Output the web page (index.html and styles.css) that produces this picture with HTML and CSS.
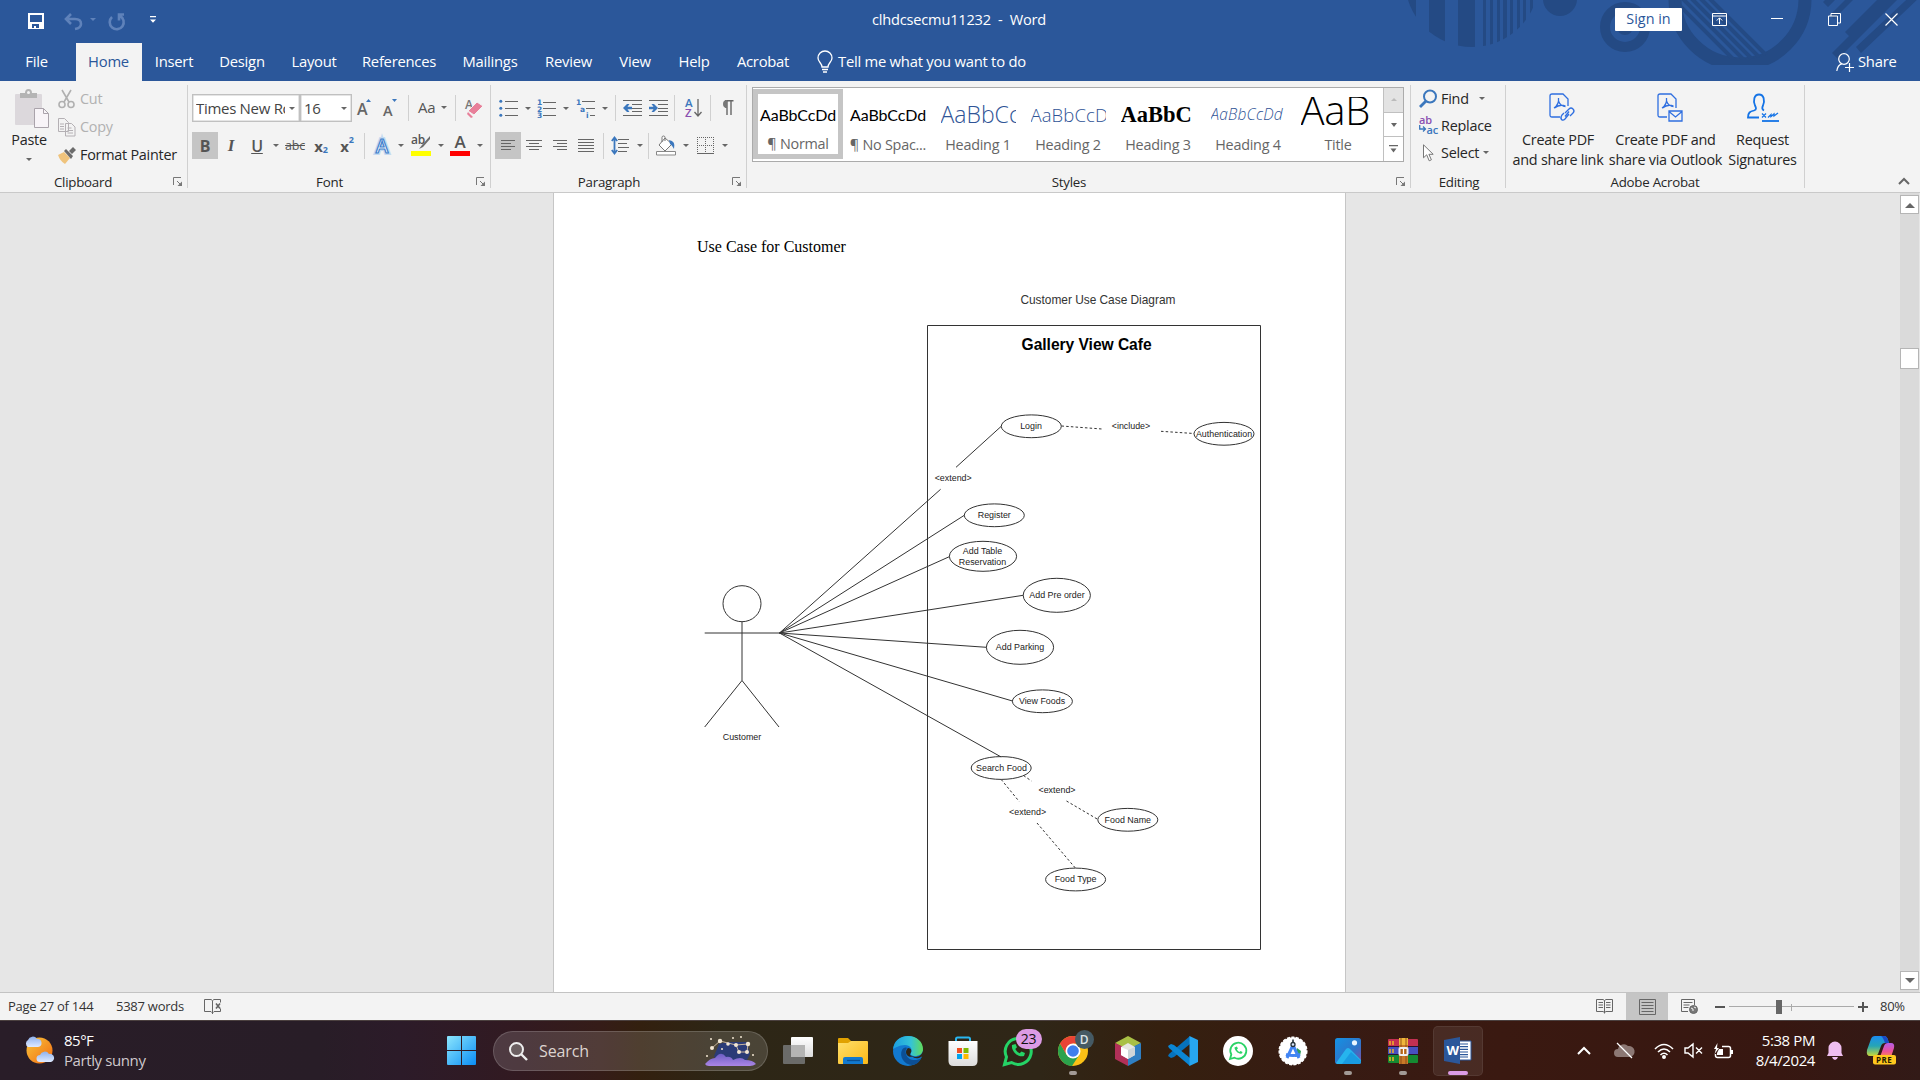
FILE: index.html
```html
<!DOCTYPE html>
<html lang="en">
<head>
<meta charset="utf-8">
<title>clhdcsecmu11232 - Word</title>
<link rel="stylesheet" href="styles.css">
</head>
<body>
<svg width="0" height="0" class="defs">
  <defs>
    <symbol id="launch" viewBox="0 0 10 10"><path d="M.5 8V.5H8M4 4l4 4" fill="none" stroke="#777"/><path d="M9 4.500V9H4.500z" fill="#777"/></symbol>
    <linearGradient id="gSun" x1="0" y1="0" x2="1" y2="1"><stop offset="0" stop-color="#f8c63a"/><stop offset="1" stop-color="#f26a12"/></linearGradient>
    <linearGradient id="gCloud" x1="0" y1="0" x2="0" y2="1"><stop offset="0" stop-color="#8fb2ee"/><stop offset="1" stop-color="#dfeaff"/></linearGradient>
    <linearGradient id="gWin" x1="0" y1="0" x2="1" y2="1"><stop offset="0" stop-color="#8ce6fd"/><stop offset="1" stop-color="#0a8df5"/></linearGradient>
    <linearGradient id="gWhite" x1="0" y1="0" x2="0" y2="1"><stop offset="0" stop-color="#fff"/><stop offset="1" stop-color="#dcdcdc"/></linearGradient>
    <linearGradient id="gFold" x1="0" y1="0" x2="1" y2="1"><stop offset="0" stop-color="#ffdf6b"/><stop offset="1" stop-color="#fbb917"/></linearGradient>
    <linearGradient id="gEdge" x1="0" y1="0" x2="1" y2="0"><stop offset="0" stop-color="#1b9de2"/><stop offset=".6" stop-color="#35c3d6"/><stop offset="1" stop-color="#62dc58"/></linearGradient>
    <linearGradient id="gPhoto" x1="0" y1="0" x2="1" y2="1"><stop offset="0" stop-color="#1492e4"/><stop offset=".6" stop-color="#2f74c9"/><stop offset="1" stop-color="#8150a5"/></linearGradient>
    <linearGradient id="gHill" x1="0" y1="0" x2="0" y2="1"><stop offset="0" stop-color="#6c5dc4"/><stop offset="1" stop-color="#ab86e6"/></linearGradient>
    <linearGradient id="gCoA" x1="0" y1="0" x2="0" y2="1"><stop offset="0" stop-color="#1b8cf0"/><stop offset=".5" stop-color="#25a5b5"/><stop offset="1" stop-color="#c9d938"/></linearGradient>
    <linearGradient id="gCoB" x1="0" y1="0" x2="0" y2="1"><stop offset="0" stop-color="#b35ee8"/><stop offset=".6" stop-color="#ee5297"/><stop offset="1" stop-color="#fb8a4d"/></linearGradient>
  </defs>
</svg>
<div class="app">
  <header class="head">
    <svg class="head-art" width="520" height="81" viewBox="0 0 520 81" fill="#244a84">
      <clipPath id="cl"><circle cx="72" cy="-20" r="67"/></clipPath>
      <g clip-path="url(#cl)"><path d="M7 0h9v40H7zM29 0h16v60H29zM58 0h17v60H58zM83 0h3v60h-3zM90 0h3v60h-3zM97 0h3v60h-3zM103 0h4v60h-4zM110 0h3v60h-3zM117 0h3v60h-3zM123 0h3v60h-3zM130 0h3v60h-3z"/></g>
      <circle cx="160" cy="-1" r="17"/>
      <circle cx="225" cy="27" r="20" fill="none" stroke="#244a84" stroke-width="10"/><circle cx="225" cy="27" r="8"/>
      <clipPath id="cr"><path d="M260 0h160v65H260z"/></clipPath>
      <clipPath id="cc"><circle cx="340" cy="-6" r="66"/></clipPath>
      <g clip-path="url(#cr)"><circle cx="340" cy="-1" r="65" fill="none" stroke="#244a84" stroke-width="13"/>
      <g clip-path="url(#cc)" stroke="#244a84" stroke-width="4"><path d="M274-10l80 80M283-10l80 80M292-10l80 80M301-10l80 80M264-10l80 80" /></g></g>
      <path d="M455-30l-32 32 5 5 37-37zM487-10l-42 42 5 5 47-47zM509-24l-77 77 6 6 83-83zM520-13l-64 60 5 6 59-56zM475-30l-45 45 4 4 50-50z"/>
    </svg>
    <div class="titlebar">
      <div class="quick">
        <svg width="16" height="16" viewBox="0 0 16 16"><path d="M0 0h16v16H0zM2 2v7h12V2zM4 11v4h2v-2h2v2h3v-4z" fill="#fff" fill-rule="evenodd"/></svg>
        <svg class="q-undo" width="32" height="18" viewBox="0 0 32 18"><path d="M7 1L2 6l5 5M2 6h9q6 0 6 5 0 4-6 5" fill="none" stroke="#5f82ba" stroke-width="2.600"/><path d="M26 5h6l-3 3z" fill="#5f82ba"/></svg>
        <svg class="q-redo" width="18" height="18" viewBox="0 0 18 18"><path d="M4 4a7 7 0 1 0 8-1M16 1.500h-5v6" fill="none" stroke="#5f82ba" stroke-width="2.600"/></svg>
        <svg class="q-more" width="6" height="8" viewBox="0 0 6 8"><path d="M0 0h6v1.300H0zM0 3.500h6L3 6.800z" fill="#fff"/></svg>
      </div>
      <div class="doc-title">clhdcsecmu11232&nbsp; -&nbsp; Word</div>
      <div class="win-ctl">
        <span class="signin">Sign in</span>
        <svg class="w1" width="15" height="13" viewBox="0 0 15 13" fill="none" stroke="#fff"><path d="M.5.500h14v12H.500zM.500 3h14M7.500 11V5M4.800 7.500l2.700-2.700 2.700 2.700"/></svg>
        <svg class="w2" width="12" height="12" viewBox="0 0 12 12"><path d="M0 5.500h12" stroke="#fff" fill="none"/></svg>
        <svg class="w3" width="13" height="13" viewBox="0 0 13 13" fill="none" stroke="#fff"><path d="M.500 3h9v9.500h-9zM3 3V.500h9.500V10H10"/></svg>
        <svg class="w4" width="13" height="13" viewBox="0 0 13 13" fill="none" stroke="#fff" stroke-width="1.200"><path d="M.5.500l12 12M12.500.500l-12 12"/></svg>
      </div>
    </div>
    <nav class="tabs">
      <span class="t-file">File</span><span class="t-home">Home</span><span class="t-insert">Insert</span><span class="t-design">Design</span><span class="t-layout">Layout</span><span class="t-ref">References</span><span class="t-mail">Mailings</span><span class="t-review">Review</span><span class="t-view">View</span><span class="t-help">Help</span><span class="t-acro">Acrobat</span>
      <svg class="bulb" width="16" height="23" viewBox="0 0 16 23" fill="none" stroke="#fff" stroke-width="1.300"><path d="M5 16c0-4-4-5-4-9a7 7 0 0 1 14 0c0 4-4 5-4 9zM5 18.500h6M6 21h4"/></svg>
      <span class="tell">Tell me what you want to do</span>
      <svg class="share-i" width="19" height="19" viewBox="0 0 19 19" fill="none" stroke="#fff" stroke-width="1.200"><circle cx="8" cy="6" r="5.300"/><path d="M.800 18c.5-4 2.500-6.500 5-7.200M9 14.500h9M13.500 10v9"/></svg>
      <span class="share">Share</span>
    </nav>
  </header>

  <section class="ribbon">
    <div class="group g-clip">
      <div class="g-body clip">
        <div class="paste">
          <svg width="36" height="40" viewBox="0 0 36 40"><rect x="1" y="5" width="27" height="31" rx="1" fill="#dcd8dc"/><path d="M6 4h5q0-4 3.500-4T18 4h5v5H6z" fill="#b4b4b4"/><circle cx="14.500" cy="3.500" r="1.500" fill="#f3f3f3"/><path d="M20.500 19.500h9l5 5v14h-14z" fill="#f8f4f8" stroke="#aaa3ab"/><path d="M29.500 19.500v5h5" fill="none" stroke="#aaa3ab"/></svg>
          <span>Paste</span><i class="arr"></i>
        </div>
        <div class="clip-list">
          <div class="off"><svg width="18" height="19" viewBox="0 0 18 19" fill="none" stroke="#b0b0b0" stroke-width="1.600"><path d="M4 0l7 12M13 0L6 12"/><circle cx="4" cy="14.500" r="3"/><circle cx="13" cy="14.500" r="3"/></svg><span>Cut</span></div>
          <div class="off"><svg width="18" height="19" viewBox="0 0 18 19" fill="#f3f3f3" stroke="#b4b0b4"><path d="M.5.500h6l4 4v9H.500zM7.500 5.500h6l3.500 3.500v9H7.500zM2 6h4M2 8.500h4M2 11h4M9.500 10h4M9.500 12.500h5.500M9.500 15h5.500"/></svg><span>Copy</span></div>
          <div><svg width="18" height="17" viewBox="0 0 18 17"><path d="M0 8l6-3 6 6-5 6q-5-3-7-9z" fill="#efc37c"/><path d="M6 4l2-2 7 7-2 3zM11 4l4-4 3 3-4 4z" fill="#6b6b6b"/></svg><span>Format Painter</span></div>
        </div>
      </div>
      <div class="g-label"><span>Clipboard</span><svg width="10" height="10"><use href="#launch"/></svg></div>
    </div>

    <div class="group g-font">
      <div class="g-body">
        <div class="row">
          <div class="combo c-font"><span>Times New Ro</span><i class="arr"></i></div>
          <div class="combo c-size"><span>16</span><i class="arr"></i></div>
          <b class="btn w26"><svg width="16" height="18" viewBox="0 0 16 18"><text x="0" y="16" class="ga">A</text><path d="M9 3h5l-2.500-3z" fill="#3b77bd"/></svg></b>
          <b class="btn w26"><svg width="16" height="18" viewBox="0 0 16 18"><text x="0" y="17" class="gb">A</text><path d="M9 0h5l-2.500 3z" fill="#3b77bd"/></svg></b>
          <i class="sep m4"></i>
          <b class="btn w40 aa">Aa<i class="arr"></i></b>
          <i class="sep m3"></i>
          <b class="btn w30"><svg width="18" height="20" viewBox="0 0 18 20"><text x="0" y="11" class="gc">A</text><path d="M3 13l9-9 6 4-9 9z" fill="#e8809a" stroke="#f3f3f3"/><path d="M3 14l5 5-2 1-4-4z" fill="#e8809a"/></svg></b>
        </div>
        <div class="row">
          <b class="btn w26 on fb">B</b><b class="btn w26 fi">I</b><b class="btn w26 fu"><u>U</u></b><b class="btn w12"><i class="arr"></i></b>
          <b class="btn w26 fs"><s>abc</s></b><b class="btn w26 fx">x<sub>2</sub></b><b class="btn w26 fx">x<sup>2</sup></b>
          <i class="sep m4"></i>
          <b class="btn w28"><svg width="18" height="20" viewBox="0 0 18 20"><text x="9" y="17" class="halo">A</text><text x="9" y="17" class="glow">A</text></svg></b><b class="btn w9"><i class="arr"></i></b>
          <b class="btn w34"><svg width="20" height="21" viewBox="0 0 20 21"><text x="0" y="9" class="gh">ab</text><path d="M19 1l-8 9-3 4 4-2 7-8z" fill="#6d6d6d"/><path d="M0 16h20v5H0z" fill="#ff0"/></svg></b><b class="btn w9"><i class="arr"></i></b>
          <b class="btn w30"><svg width="20" height="21" viewBox="0 0 20 21"><text x="10" y="13" class="gr">A</text><path d="M0 16h20v5H0z" fill="red"/></svg></b><b class="btn w9"><i class="arr"></i></b>
        </div>
      </div>
      <div class="g-label"><span>Font</span><svg width="10" height="10"><use href="#launch"/></svg></div>
    </div>

    <div class="group g-para">
      <div class="g-body">
        <div class="row">
          <b class="btn w27"><svg width="19" height="18" viewBox="0 0 19 18"><path d="M6 2.500h13M6 9.500h13M6 16.500h13" stroke="#666"/><g fill="#3b77bd"><circle cx="1.800" cy="2.300" r="1.500"/><circle cx="1.800" cy="9.300" r="1.500"/><circle cx="1.800" cy="16.300" r="1.500"/></g></svg></b><b class="btn w11"><i class="arr"></i></b>
          <b class="btn w27"><svg width="19" height="19" viewBox="0 0 19 19"><path d="M6 3.500h13M6 9.500h13M6 16.500h13" stroke="#666"/><g class="num"><text x="0" y="6">1</text><text x="0" y="12.500">2</text><text x="0" y="19">3</text></g></svg></b><b class="btn w12"><i class="arr"></i></b>
          <b class="btn w27"><svg width="19" height="19" viewBox="0 0 19 19"><path d="M6 2.500h13M10 9.500h9M14 16.500h5" stroke="#666"/><g class="num"><text x="0" y="6">1</text><text x="4" y="12.500">a</text><text x="10" y="19">i</text></g></svg></b><b class="btn w12"><i class="arr"></i></b>
          <i class="sep m4"></i>
          <b class="btn w26"><svg width="19" height="16" viewBox="0 0 19 16"><path d="M0 .5h19M9 4.500h10M9 8.500h10M9 11.500h10M0 15.500h19" stroke="#666"/><path d="M0 8l4-4h2.500L4.500 6.800H9v2.500H4.500L6.500 12H4z" fill="#3b77bd"/></svg></b>
          <b class="btn w26"><svg width="19" height="16" viewBox="0 0 19 16"><path d="M0 .5h19M9 4.500h10M9 8.500h10M9 11.500h10M0 15.500h19" stroke="#666"/><path d="M9 8L5 4H2.500l2 2.800H0v2.500h4.500L2.500 12H5z" fill="#3b77bd"/></svg></b>
          <i class="sep m3"></i>
          <b class="btn w30"><svg width="17" height="20" viewBox="0 0 17 20"><text x="0" y="9" class="az1">A</text><text x="0" y="19" class="az2">Z</text><path d="M13 1v17M9.500 14l3.500 4 3.500-4" fill="none" stroke="#666" stroke-width="1.300"/></svg></b>
          <i class="sep m2"></i>
          <b class="btn w26"><svg width="13" height="16" viewBox="0 0 13 16"><path d="M5 8V0M6 0v15M10 0v15M4 .700h8.500" stroke="#666" stroke-width="1.400"/><path d="M6 8a4 4 0 0 1 0-8z" fill="#777"/></svg></b>
        </div>
        <div class="row">
          <b class="btn w26 on"><svg width="14" height="12" viewBox="0 0 14 12"><path d="M0 .5h14M0 3.500h10M0 6.500h14M0 9.500h10" stroke="#666"/></svg></b>
          <b class="btn w26"><svg width="16" height="12" viewBox="0 0 16 12"><path d="M0 .5h16M3 3.500h10M0 6.500h16M3 9.500h10" stroke="#666"/></svg></b>
          <b class="btn w26"><svg width="14" height="12" viewBox="0 0 14 12"><path d="M0 .5h14M4 3.500h10M0 6.500h14M4 9.500h10" stroke="#666"/></svg></b>
          <b class="btn w26"><svg width="16" height="14" viewBox="0 0 16 14"><path d="M0 .5h16M0 3.500h16M0 6.500h16M0 9.500h16M0 12.500h16" stroke="#666"/></svg></b>
          <i class="sep m4"></i>
          <b class="btn w27"><svg width="19" height="19" viewBox="0 0 19 19"><path d="M7 3.500h11M7 7.500h9M7 11.500h11M7 15.500h9" stroke="#666"/><path d="M3.500 2v15M.8 5l2.700-3.500L6.200 5M.8 14l2.700 3.500L6.200 14" fill="none" stroke="#3b77bd" stroke-width="1.800"/></svg></b><b class="btn w11"><i class="arr"></i></b>
          <i class="sep m3"></i>
          <b class="btn w28"><svg width="21" height="20" viewBox="0 0 21 20"><path d="M9 2l7 6-7 7-6-6zM9 5V1.500q0-1.500-1.500-1.500T6 1.500V6" fill="#fff" stroke="#777"/><path d="M13 4q7 1 5 9-2-4-4-5z" fill="#3b77bd"/><path d="M.500 15.500h19v3.500H.500z" fill="#fff" stroke="#888"/></svg></b><b class="btn w12"><i class="arr"></i></b>
          <b class="btn w27"><svg width="17" height="17" viewBox="0 0 17 17" fill="none" stroke="#666"><path d="M0 .500h17M.500 0v17M16.500 0v17M0 8.500h17M8.500 0v17" stroke-dasharray="1 1"/><path d="M0 16.500h17"/></svg></b><b class="btn w12"><i class="arr"></i></b>
        </div>
      </div>
      <div class="g-label"><span>Paragraph</span><svg width="10" height="10"><use href="#launch"/></svg></div>
    </div>

    <div class="group g-styles">
      <div class="g-body">
        <div class="gallery">
          <div class="st sel"><em class="s0">AaBbCcDd</em><span>¶ Normal</span></div>
          <div class="st"><em class="s0">AaBbCcDd</em><span>¶ No Spac...</span></div>
          <div class="st"><em class="s1">AaBbCc</em><span>Heading 1</span></div>
          <div class="st"><em class="s2">AaBbCcD</em><span>Heading 2</span></div>
          <div class="st"><em class="s3">AaBbC</em><span>Heading 3</span></div>
          <div class="st"><em class="s4">AaBbCcDd</em><span>Heading 4</span></div>
          <div class="st"><em class="s5">AaB</em><span>Title</span></div>
          <div class="gal-scroll"><p class="dim"><svg width="6" height="3"><path d="M0 3h6L3 0z" fill="#bbb"/></svg></p><p><svg width="6" height="4"><path d="M0 0h6L3 4z" fill="#666"/></svg></p><p><svg width="9" height="8"><path d="M0 0h9v1.200H0zM1.500 3.500h6l-3 4z" fill="#666"/></svg></p></div>
        </div>
      </div>
      <div class="g-label"><span>Styles</span><svg width="10" height="10"><use href="#launch"/></svg></div>
    </div>

    <div class="group g-edit">
      <div class="g-body edit">
        <div><svg width="19" height="19" viewBox="0 0 19 19" fill="none" stroke="#3b77bd"><circle cx="11" cy="7.500" r="6" stroke-width="2"/><path d="M7 12l-6 6" stroke-width="2.800"/></svg><span>Find</span><i class="arr a1"></i></div>
        <div><svg width="19" height="20" viewBox="0 0 19 20"><text x="0" y="8" class="rp">ab</text><text x="7.500" y="17.500" class="rp rq">ac</text><path d="M.7 9v4h5.500M4 10.500L6.500 13 4 15.500" fill="none" stroke="#3b77bd" stroke-width="1.300"/></svg><span>Replace</span></div>
        <div><svg width="19" height="18" viewBox="0 0 19 18"><path d="M4.500.8v13l3.200-3 2.500 6 2.200-1-2.500-5.500h4.300z" fill="#fff" stroke="#777"/></svg><span>Select</span><i class="arr a2"></i></div>
      </div>
      <div class="g-label"><span>Editing</span></div>
    </div>

    <div class="group g-acro">
      <div class="g-body acro">
        <div class="ac1"><svg width="26" height="30" viewBox="0 0 26 30" fill="none" stroke="#2f6fe0" stroke-width="1.300"><path d="M11 24H3q-2 0-2-2V3q0-2 2-2h11l5 5v7"/><path d="M5 15c3-2 5-6 4.500-10M9.500 8c1 3 4 5.500 7 5.500M5.500 15c3-2.500 7-3.500 11-2"/><path d="M16 20l4-4q2-2 4 0t0 4l-3 3M20 21l-4 5q-2 2-3.500.5T13 22l2-2M16 23.500l4-5"/></svg><span>Create PDF<br>and share link</span></div>
        <div class="ac2"><svg width="26" height="30" viewBox="0 0 26 30" fill="none" stroke="#2f6fe0" stroke-width="1.300"><path d="M10 24H3q-2 0-2-2V3q0-2 2-2h11l5 5v9"/><path d="M5 15c3-2 5-6 4.500-10M9.500 8c1 3 4 5.500 7 5.500M5.500 15c3-2.500 7-3.500 11-2"/><path d="M12 18h13v10H12zM12 18.500l6.500 5.500 6.500-5.500"/></svg><span>Create PDF and<br>share via Outlook</span></div>
        <div class="ac3"><svg width="32" height="29" viewBox="0 0 32 29" fill="none" stroke="#1473e6" stroke-width="1.800"><path d="M12 24H1c0-5 2-6 6-7 3-1 2-3 1-5-2-5-1-11 4-11s6 6 4 11c-1 2-1 4 1 5"/><path d="M15 20l4 4M19 20l-4 4M21 24l3-3 0 2 3-2.500 0 2 4-3" stroke-width="1.300"/><path d="M15 27.500h17" stroke-width="1.800"/></svg><span>Request<br>Signatures</span></div>
      </div>
      <div class="g-label"><span>Adobe Acrobat</span></div>
    </div>
    <svg class="collapse" width="12" height="8" viewBox="0 0 12 8"><path d="M1 7l5-5 5 5" fill="none" stroke="#666" stroke-width="2"/></svg>
  </section>

  <main class="work">
    <article class="page">
      <h1>Use Case for Customer</h1>
      <svg class="diagram" width="620" height="700" viewBox="680 270 620 700">
        <g fill="none" stroke="#333">
          <path d="M927.500 325.500H1260.500V949.500H927.500z"/>
          <ellipse cx="742" cy="603.700" rx="19" ry="18"/>
          <path d="M742 622v58.500M704.700 633H779.500M704.700 727l37.300-46.500L779 727"/>
          <path d="M779.500 633L940.600 489.300M956 467.300L1001 426.500M779.500 633L964.300 515.300M779.500 633L949.300 556.700M779.500 633L1023.200 595.300M779.500 633L986.400 647.300M779.500 633L1012.500 701M779.500 633L1001.200 757"/>
          <ellipse cx="1031.300" cy="426.300" rx="30" ry="11.400"/><ellipse cx="1224" cy="433.800" rx="30" ry="11.400"/>
          <ellipse cx="994.300" cy="515.300" rx="30" ry="11.400"/><ellipse cx="983" cy="556.300" rx="33.600" ry="15"/>
          <ellipse cx="1056.800" cy="595.300" rx="33.600" ry="17"/><ellipse cx="1020" cy="647.300" rx="33.600" ry="17"/>
          <ellipse cx="1042.400" cy="701.300" rx="30" ry="11.400"/><ellipse cx="1001.200" cy="768" rx="30" ry="11.400"/>
          <ellipse cx="1127.800" cy="819.800" rx="30" ry="11.400"/><ellipse cx="1075.600" cy="879.500" rx="30" ry="11.400"/>
          <path stroke-dasharray="2.500 2.200" d="M1061.500 426l40.500 3M1161 431.300l33 2.200M1023.500 775.500l8 5.500M1066.500 801l31.500 18.500M1001.200 779.500l18 22M1037 823l38.600 45.300"/>
        </g>
        <text x="1020.400" y="304" class="d-cap" textLength="155">Customer Use Case Diagram</text>
        <text x="1021.600" y="350" class="d-title" textLength="130">Gallery View Cafe</text>
        <g class="d-t">
          <text x="742" y="740">Customer</text><text x="1031" y="429">Login</text><text x="1131" y="429">&lt;include&gt;</text><text x="1224" y="436.500">Authentication</text>
          <text x="953.200" y="480.500">&lt;extend&gt;</text><text x="994.300" y="518">Register</text><text x="982.500" y="554">Add Table</text><text x="982.500" y="565">Reservation</text>
          <text x="1057" y="598">Add Pre order</text><text x="1020" y="650">Add Parking</text><text x="1042" y="704">View Foods</text><text x="1001.500" y="771">Search Food</text>
          <text x="1057" y="793">&lt;extend&gt;</text><text x="1027.600" y="815">&lt;extend&gt;</text><text x="1127.800" y="823">Food Name</text><text x="1075.600" y="882">Food Type</text>
        </g>
      </svg>
    </article>
    <div class="vscroll">
      <p><svg width="10" height="6"><path d="M0 6h10L5 1z" fill="#666"/></svg></p>
      <p class="thumb"></p>
      <p class="down"><svg width="10" height="6"><path d="M0 0h10L5 5z" fill="#666"/></svg></p>
    </div>
  </main>

  <footer class="status">
    <span class="s-page">Page 27 of 144</span><span class="s-words">5387 words</span>
    <svg class="s-proof" width="17" height="15" viewBox="0 0 17 15" fill="none" stroke="#666"><path d="M8.500 2v13M8.500 1.500L7 .500H.500v12h6.500l1.500 1.500 1.500-1.500h6.500v-3M8.500 1.500L10 .500h6.500v3"/><path d="M12 4.500l4 5M16 4.500l-4 5" stroke-width="1.600"/></svg>
    <svg class="s-read" width="17" height="15" viewBox="0 0 17 15" fill="none" stroke="#666"><path d="M8.500 1.500v13M8.500 1.500L7 .500H.500v12H7l1.500 1 1.500-1h6.500V.500H10zM2.500 3.500H7M2.500 6H7M2.500 8.500H7M10 3.500h4.500M10 6h4.500M10 8.500h4.500"/></svg>
    <b class="s-print"><svg width="17" height="16" viewBox="0 0 17 16" fill="none" stroke="#666"><path d="M.5.500h16v15H.500zM2.500 3.500h12M2.500 6.500h12M2.500 9.500h12M2.500 12.500h12"/></svg></b>
    <svg class="s-web" width="17" height="15" viewBox="0 0 17 15" fill="none" stroke="#666"><path d="M7 12.500H.500V.500h13V6M2.500 3.500h9M2.500 6h6M2.500 8.500h5"/><circle cx="12.500" cy="10.500" r="4" fill="#777"/><path d="M10 9l2 1v2M13 8l2 1" stroke="#f3f3f3"/></svg>
    <i class="zm"></i>
    <div class="slider"><i class="knob"></i><i class="tick"></i></div>
    <svg class="zp" width="10" height="10"><path d="M0 5h10M5 0v10" stroke="#555" stroke-width="2"/></svg>
    <span class="s-zoom">80%</span>
  </footer>

  <footer class="taskbar">
    <svg class="wx" width="31" height="30" viewBox="0 0 31 30"><circle cx="15.500" cy="15.500" r="13" fill="url(#gSun)"/><path d="M4 12a4 4 0 0 1 0-7 5 5 0 0 1 9-1 4 4 0 0 1 1 8z" fill="url(#gCloud)"/><path d="M16 27a3.500 3.500 0 0 1 0-7 5 5 0 0 1 9-1 4 4 0 0 1 2 8z" fill="url(#gCloud)"/></svg>
    <div class="wtext"><span>85°F</span><span class="dimt">Partly sunny</span></div>
    <svg class="start" width="29" height="29" viewBox="0 0 29 29" fill="url(#gWin)"><path d="M0 1q0-1 1-1h13v14H0zM15 0h13q1 0 1 1v13H15zM0 15h14v14H1q-1 0-1-1zM15 15h14v13q0 1-1 1H15z"/></svg>
    <div class="search"><svg width="20" height="20" viewBox="0 0 20 20" fill="none" stroke="#eee" stroke-width="2"><circle cx="8.500" cy="8.500" r="6.500" fill="#6b5f61"/><path d="M13 13l6 6" stroke-width="2.400"/></svg><span>Search</span>
      <svg class="stars" width="52" height="30" viewBox="0 0 52 30"><path d="M9 20L14 8l8-2 20 0 3 12-4 8H12z" fill="#2b3b77"/><path d="M0 28q5-6 10-6 6-8 11-1 5-1 7 3 8-4 12 0 8 0 11 4-3 2-6 2H4q-3 0-4-2z" fill="url(#gHill)"/><path d="M7 12l8-7 8 2 8 2 12-1-1 8h-8l-3-7" fill="none" stroke="#c9b49b"/><g fill="#f2e6d2"><circle cx="7" cy="12" r="2"/><circle cx="15" cy="5" r="2.200"/><circle cx="23" cy="8" r="1.800"/><circle cx="31" cy="9" r="2"/><circle cx="43" cy="8" r="2.200"/><circle cx="42" cy="16" r="2"/><circle cx="34" cy="16" r="2"/><circle cx="6" cy="3" r="1"/><circle cx="28" cy="2" r="1"/><circle cx="36" cy="1" r="1"/><circle cx="2" cy="20" r="1"/><circle cx="48" cy="19" r="1"/><circle cx="17" cy="13" r="1"/></g></svg>
    </div>
    <div class="apps">
      <b><svg width="30" height="30" viewBox="0 0 30 30"><rect x="0" y="9" width="22" height="19" rx="1" fill="#6b6b69"/><rect x="8" y="1" width="22" height="20" rx="1" fill="url(#gWhite)"/><path d="M8 9h14v12H8z" fill="#b4b4b3"/></svg></b>
      <b><svg width="30" height="30" viewBox="0 0 30 30"><path d="M0 3q0-1 1-1h9l3 3v7H0z" fill="#e1a100"/><path d="M0 7h10l3-2h16q1 0 1 1v21q0 1-1 1H1q-1 0-1-1z" fill="url(#gFold)"/><path d="M5 28v-5q0-2 2-2h16q2 0 2 2v5z" fill="#1279cf"/><path d="M9 24.500h13" stroke="#0a4f92" stroke-width="1.300"/></svg></b>
      <b><svg width="30" height="30" viewBox="0 0 30 30"><circle cx="15" cy="15" r="15" fill="#1279d0"/><path d="M0 13C1 5 7 0 15 0c9 0 15 6 15 13 0 5-4 7-8 7-3 0-5-1-4-3 2-4-1-8-6-8-6 0-10 3-12 4z" fill="url(#gEdge)"/><path d="M9 14c-3 6 2 15 10 15 4 0 8-3 9-7-5 4-14 2-15-4-1-3 0-5 1-6-2-1-4 0-5 2z" fill="#0c4f95"/><path d="M19 20c4 2 9 1 11-5v5l-4 2q-5 1-7-2z" fill="#2f2617"/><path d="M15 12c4 0 4 4 2 6 0 2 2 2 4 2-4 2-8 0-8-4 0-2 1-3 2-4z" fill="#2f2617"/></svg></b>
      <b><svg width="30" height="30" viewBox="0 0 30 30"><path d="M8 6V3q0-1.500 1.500-1.500h11Q22 1.500 22 3v3" fill="none" stroke="#29b6f0" stroke-width="2"/><path d="M.500 5h29v20q0 5-5 5h-19q-5 0-5-5z" fill="url(#gWhite)"/><path d="M9 12h5v5H9z" fill="#f25022"/><path d="M15.500 12h5v5h-5z" fill="#7fba00"/><path d="M9 18h5v5H9z" fill="#00a4ef"/><path d="M15.500 18h5v5h-5z" fill="#ffb900"/></svg></b>
      <b><svg width="30" height="30" viewBox="0 0 30 30" fill="none" stroke="#25d366"><path d="M1.500 28.500l2-7.500a13 13 0 1 1 5 5.500z" stroke-width="3"/><path d="M9 9c-1 6 6 13 12 11l1-3-3.500-1.500-1.800 1.800q-3-1.300-4.400-4.300l1.700-1.700L12.500 8z" fill="#25d366" stroke="none"/></svg><u class="badge">23</u></b>
      <b><svg width="30" height="30" viewBox="0 0 30 30"><circle cx="15" cy="15" r="15" fill="#fbc116"/><path d="M2 7.500A15 15 0 0 0 14 30l7.500-11.500L8.500 18.500z" fill="#2ba24c"/><path d="M2 7.500A15 15 0 0 1 28 7.500H15l-6.500 11z" fill="#e94335"/><circle cx="15" cy="15" r="7.500" fill="#fff"/><circle cx="15" cy="15" r="5.800" fill="#3f7fee"/></svg><u class="dbadge">D</u><i class="run"></i></b>
      <b><svg width="26" height="30" viewBox="0 0 26 30"><path d="M0 7l13-7 13 7-13 7z" fill="#a9c045"/><path d="M0 7l13 6v17L0 23z" fill="#b13058"/><path d="M26 7l-13 6v17l13-7z" fill="#2f7fc3"/><path d="M13 7l7 4v8l-7 4-7-4v-8z" fill="#e6e6e1"/><path d="M13 14v9l-7-4v-8z" fill="#fff"/><path d="M13 14v9l7-4v-8z" fill="#cfd6d8"/></svg></b>
      <b><svg width="30" height="30" viewBox="0 0 30 30"><path d="M22 0L1 18l-1 2 3 2 3-1L22 8z" fill="#0672bd"/><path d="M22 30L1 12l-1-2 3-2 3 1 16 13z" fill="#0b86d4"/><path d="M21.500 0L30 4v22l-8.500 4z" fill="#27a6f0"/></svg></b>
      <b><svg width="30" height="30" viewBox="0 0 30 30"><circle cx="15" cy="15" r="15" fill="#fff"/><g fill="none" stroke="#2ad366"><path d="M7 23l1.300-4.500a8 8 0 1 1 3.200 3.200z" stroke-width="1.800"/><path d="M11.500 11.500c0 3 4 7 7.500 6l.5-1.500-2-1-1 1q-1.800-.8-2.600-2.500l1-1-1-2z" fill="#2ad366" stroke="none"/></g></svg></b>
      <b><svg width="30" height="30" viewBox="0 0 30 30"><circle cx="15" cy="15" r="13.800" fill="#fff" stroke="#fff" stroke-width="1.500" stroke-dasharray="3 1.500"/><path d="M19 12l4 3-1 5-5 1z" fill="#2e9e5b"/><path d="M9 22L15 9l6 13M8 18.500q7 2 14 0" fill="none" stroke="#4285f4" stroke-width="3"/><circle cx="15" cy="8.500" r="2" fill="#dce9ff" stroke="#263238" stroke-width="1.300"/><path d="M14.200 3.500h1.600v3h-1.600z" fill="#263238"/></svg></b>
      <b><svg width="26" height="26" viewBox="0 0 26 26"><rect width="26" height="26" rx="2.500" fill="url(#gPhoto)"/><path d="M1 25L11 11q2-2 4 0l11 11v2q0 2-2 2H2z" fill="#26b4ee"/><path d="M7 26l9-12 10 9v1q0 2-2 2z" fill="#0f86d8" opacity=".55"/><circle cx="19.500" cy="4.800" r="2.600" fill="#e9f5ff"/></svg><i class="run"></i></b>
      <b><svg width="30" height="26" viewBox="0 0 30 26"><rect y="1" width="30" height="8" rx="1" fill="#c33052"/><rect y="9" width="30" height="8" fill="#4750c0"/><rect y="17" width="30" height="8" rx="1" fill="#158a32"/><path d="M0 8.500h30M0 16.500h30" stroke="#261430"/><path d="M2 3v4M2 11v4M2 19v4M5 3v4M5 11v4M5 19v4" stroke="#f0b429" stroke-width="1.500"/><path d="M11 0h9v26h-9z" fill="#c87928"/><path d="M11 0h9v7h-9z" fill="#efb63b"/><path d="M13 0v26M18 0v26" stroke="#84420f" stroke-width=".8"/><rect x="11.500" y="10" width="8" height="7" rx="1" fill="none" stroke="#eee" stroke-width="2"/><path d="M15.500 11v5" stroke="#fff"/></svg><i class="run"></i></b>
      <b class="cur"><svg width="28" height="28" viewBox="0 0 28 28"><path d="M14 4h13v19H14z" fill="#fff" stroke="#2b579a" stroke-width="1"/><path d="M16 7h8M16 9.700h8M16 12.400h8M16 15h8M16 17.700h8M16 20h8" stroke="#2b579a" stroke-width="1.200"/><path d="M0 3l16-3v27L0 24z" fill="#2b579a"/><text x="2.500" y="18" class="wd">W</text></svg><i class="run now"></i></b>
    </div>
    <svg class="t1" width="14" height="9" viewBox="0 0 14 9"><path d="M1 8l6-6 6 6" fill="none" stroke="#fff" stroke-width="2"/></svg>
    <svg class="t2" width="20" height="16" viewBox="0 0 20 16"><path d="M4 14a4 4 0 0 1 0-8 6 6 0 0 1 10-3 5 5 0 0 1 2 11z" fill="#8c7874"/><path d="M3 0l15 15" stroke="#fff" stroke-width="1.300"/></svg>
    <svg class="t3" width="20" height="16" viewBox="0 0 20 16" fill="none" stroke="#fff" stroke-width="1.600"><path d="M1 6q9-9 18 0M4 9q6-6 12 0M6.500 12q3.500-3.500 7 0"/><circle cx="10" cy="14" r="1.200" fill="#fff"/></svg>
    <svg class="t4" width="19" height="15" viewBox="0 0 19 15" fill="none" stroke="#fff" stroke-width="1.400"><path d="M1 5h3l5-4v13l-5-4H1zM12 4.500l6 6M18 4.500l-6 6"/></svg>
    <svg class="t5" width="21" height="16" viewBox="0 0 21 16" fill="none" stroke="#fff" stroke-width="1.500"><path d="M9 3.500h6.500q2 0 2 2v7q0 2-2 2h-11q-2 0-2-2V11"/><path d="M19 7v4" stroke-width="2"/><path d="M6 6h4v6H4v-2z" fill="#fff" stroke="none"/><path d="M4.500 0L1 6h2L1.500 11 6 5H4z" fill="#fff" stroke="none"/></svg>
    <div class="clock"><span>5:38 PM</span><span>8/4/2024</span></div>
    <svg class="t6" width="16" height="19" viewBox="0 0 16 19" fill="#efbef0"><path d="M0 15l1.500-3V7a6.500 6.500 0 0 1 13 0v5L16 15zM5 16h6q-1 3-3 3t-3-3z"/></svg>
    <svg class="t7" width="30" height="29" viewBox="0 0 30 29"><path d="M1 14L5 3q1-3 4-3h9q3 0 4 4l1 3h-4q-3 0-4 3l-3 8q-1 2-3 2H4q-4 0-3-6z" fill="url(#gCoA)"/><path d="M15 0h3q3 0 4 4l1 3h-4q-2-6-4-7z" fill="#1a49c4"/><path d="M18 10q1-3 4-3h3q4 0 3 5l-3 9H14z" fill="url(#gCoB)"/><rect x="7" y="19" width="23" height="9.500" rx="2" fill="#ffc81e"/><text x="10" y="27" class="pre">PRE</text></svg>
  </footer>
</div>
</body>
</html>
```
FILE: styles.css
```css
* { box-sizing: border-box; }
html, body { margin: 0; height: 100%; overflow: hidden; }
body { font-family: "Open Sans", "Noto Sans", sans-serif; font-size: 14.4px; letter-spacing: -0.25px; color: #262626; }
p { margin: 0; }
svg { display: block; flex: none; overflow: visible; }
span { white-space: nowrap; }
.defs { position: absolute; }
.app { width: 1920px; height: 1080px; display: flex; flex-direction: column; }

/* title bar and tabs */
.head { height: 81px; background: #2b579a; color: #fff; position: relative; flex: none; }
.head-art { position: absolute; right: 0; top: 0; overflow: hidden; }
.titlebar { height: 43px; display: flex; position: relative; }
.quick { width: 872px; display: flex; align-items: center; padding-left: 28px; flex: none; }
.quick svg:first-child { margin-top: -1px; }
.q-undo { margin-left: 20px; }
.q-redo { margin-left: 12px; }
.q-more { margin-left: 24px; margin-top: -3px; }
.doc-title { width: 743px; line-height: 39px; white-space: nowrap; font-size: 14.6px; letter-spacing: -.2px; }
.win-ctl { display: flex; align-items: center; height: 38px; }
.signin { width: 67px; height: 23px; background: #fff; color: #2b579a; border-radius: 1px; text-align: center; line-height: 22px; letter-spacing: 0; }
.w1 { margin-left: 30px; }
.w2 { margin-left: 44px; }
.w3 { margin-left: 45px; }
.w4 { margin-left: 44px; }
.tabs { height: 38px; display: flex; align-items: center; position: relative; font-size: 14.8px; }
.tabs span { line-height: 37px; text-align: center; height: 38px; flex: none; }
.t-file { width: 73px; margin-right: 3px; }
.tabs .t-home { width: 66px; background: #f3f3f3; color: #2b579a; padding-right: 1px; }
.t-insert { width: 64px; }
.t-design, .t-layout { width: 72px; }
.t-ref { width: 98px; }
.t-mail { width: 84px; }
.t-review { width: 73px; }
.t-view { width: 60px; }
.t-help { width: 58px; }
.t-acro { width: 80px; }
.bulb { margin: 0 5px 0 14px; }
.tell { width: 998px; }
.tabs .tell { text-align: left; }
.share-i { margin-right: 3px; }

/* ribbon */
.ribbon { height: 112px; flex: none; background: #f3f3f3; border-bottom: 1px solid #c9c9c9; display: flex; }
.group { height: 103px; margin-top: 4px; border-right: 1px solid #d0d0d0; display: flex; flex-direction: column; }
.g-clip { width: 188px; }
.g-font { width: 303px; }
.g-para { width: 256px; }
.g-styles { width: 664px; }
.g-edit { width: 95px; }
.g-acro { width: 299px; }
.g-body { height: 88px; flex: none; }
.g-label { height: 18px; flex: none; display: flex; align-items: center; justify-content: center; font-size: 13.3px; }
.g-label span { flex: 1; text-align: center; padding-right: 5px; }
.g-clip .g-label span { padding-right: 7px; }
.g-label svg { margin-right: 4px; }
.arr { width: 0; height: 0; border: 3.500px solid transparent; border-top-color: #666; border-bottom: 0; display: inline-block; flex: none; }
.clip { display: flex; }
.paste { width: 58px; display: flex; flex-direction: column; align-items: center; padding-top: 4px; }
.paste svg { margin-left: 6px; }
.paste span { line-height: 20px; margin-top: 1px; }
.paste .arr { margin-top: 8px; }
.clip-list div { height: 28px; display: flex; align-items: center; }
.clip-list svg { margin-right: 4px; }
.clip-list span { line-height: 20px; }
.clip-list .off { color: #b1b1b1; }
.row { display: flex; height: 37px; align-items: center; padding-left: 4px; }
.g-body .row:first-child { padding-top: 5px; height: 41px; }
.g-body .row + .row { margin-top: 1px; height: 37px; }
.combo { height: 28px; border: 1px solid #c0c0c0; background: #fff; display: flex; align-items: center; color: #444; padding-left: 3px; box-shadow: inset 0 0 0 .5px #ccc; flex: none; }
.combo span { overflow: hidden; }
.c-font { width: 108px; font-size: 15px; letter-spacing: -.3px; }
.c-font span { width: 89px; }
.c-size { width: 52px; font-size: 15px; }
.c-size span { width: 37px; }
.combo .arr { margin-left: 4px; }
.c-size .arr { margin-left: 0; }
.btn { height: 27px; display: flex; align-items: center; justify-content: center; font-weight: normal; flex: none; color: #555; }
.on { background: #c5c5c5; }
.w9 { width: 9px; } .w11 { width: 11px; } .w12 { width: 12px; } .w26 { width: 26px; } .w27 { width: 27px; }
.w28 { width: 28px; } .w30 { width: 30px; } .w34 { width: 31px; } .w40 { width: 40px; }
.sep { width: 1px; height: 26px; background: #d0d0d0; flex: none; }
.m4 { margin: 0 3px 0 4px; }
.m3 { margin: 0 3px 0 3px; }
.m2 { margin: 0 3px 0 2px; }
.aa { justify-content: space-between; font-size: 15px; padding: 0 5px 2px 6px; }
.ga { font-size: 16px; font-weight: 600; fill: #666; }
.gb { font-size: 14.500px; font-weight: 600; fill: #666; }
.gc { font-size: 12px; font-weight: 600; fill: #777; }
.fb { font-weight: 700; font-size: 16px; }
.fi { font: italic 700 17px "Liberation Serif", serif; }
.fu { font-weight: 600; font-size: 16px; }
.fs { font-size: 12.500px; }
.fx { font-weight: 700; font-size: 15px; }
.fx sub, .fx sup { font-size: 9px; color: #3b77bd; line-height: 0; }
.fx sub { margin-top: 9px; } .fx sup { margin-top: -11px; }
.halo { font-size: 19px; font-weight: 600; text-anchor: middle; fill: none; stroke: #c5daf0; stroke-width: 4px; }
.glow { font-size: 19px; font-weight: 600; text-anchor: middle; fill: #fff; stroke: #3f80cc; stroke-width: 1.200px; }
.gh { font-size: 12px; fill: #555; font-weight: 600; }
.gr { font-size: 17px; text-anchor: middle; fill: #555; font-weight: 600; }
.num { font: 700 7.500px "DejaVu Sans", sans-serif; fill: #3b77bd; }
.az1 { font-size: 11.500px; font-weight: 600; fill: #3b77bd; }
.az2 { font-size: 11.500px; font-weight: 600; fill: #8a4fb0; }

.gallery { margin: 2px 0 0 5px; width: 652px; height: 75px; border: 1px solid #ababab; background: #fff; display: flex; }
.st { width: 90px; height: 73px; padding-top: 6px; display: flex; flex-direction: column; align-items: center; overflow: hidden; flex: none; }
.st.sel { border: 5px solid #c5c5c5; height: 70px; margin: 1px 0 0 0; padding-top: 0; }
.st em { font-style: normal; height: 41px; width: 75px; line-height: 41px; overflow: hidden; white-space: nowrap; display: block; color: #000; }
.st span { color: #666; line-height: 20px; }
.st .s0 { font: 16px/41px Lato, sans-serif; letter-spacing: -.1px; width: 80px; text-align: center; }
.st .s1 { font-size: 23px; font-weight: 300; color: #2f5496; letter-spacing: 0; }
.st .s2 { font-size: 18.500px; font-weight: 300; color: #2f5496; letter-spacing: .1px; }
.st .s3 { font: 700 22.500px/41px "Liberation Serif", serif; letter-spacing: 0; }
.st .s4 { font-size: 15.500px; font-style: italic; font-weight: 300; color: #2f5496; letter-spacing: .2px; }
.st .s5 { font-size: 40px; font-weight: 300; height: 31px; line-height: 25px; margin: 3px 0 7px; }
.gal-scroll { margin-left: auto; width: 20px; display: flex; flex-direction: column; border-left: 1px solid #c0c0c0; }
.gal-scroll p { flex: 1; display: flex; align-items: center; justify-content: center; border-bottom: 1px solid #c0c0c0; }
.gal-scroll p:last-child { border: 0; }
.gal-scroll .dim { background: #e3e3e3; }

.edit { padding-left: 8px; }
.edit div { height: 27px; display: flex; align-items: center; }
.edit span { margin-left: 3px; line-height: 20px; }
.edit .a1 { margin-left: 10px; } .edit .a2 { margin-left: 4px; }
.rp { font-size: 11px; font-weight: 600; fill: #8a4fb0; }
.rq { fill: #3b77bd; }
.acro { display: flex; padding-top: 8px; }
.acro div { display: flex; flex-direction: column; align-items: center; text-align: center; line-height: 20px; }
.acro svg { height: 30px; margin-bottom: 7px; }
.ac1 svg, .ac2 svg { margin-left: 8px; }
.ac1 { width: 104px; } .ac2 { width: 111px; } .ac3 { width: 83px; }
.g-edit .g-label span { padding: 0 0 0 2px; }
.g-acro .g-label span { padding: 0; }
.collapse { margin: 96px 0 0 93px; }

/* document */
.work { height: 800px; flex: none; background: #e6e6e6; display: flex; position: relative; border-bottom: 1px solid #c3c3c3; }
.page { margin-left: 553px; width: 793px; background: #fff; border: 1px solid #c6c6c6; border-width: 0 1px; padding: 44px 0 0 143px; }
.page h1 { font: 16px/20px "Liberation Serif", serif; color: #000; margin: 0; letter-spacing: 0; }
.diagram { margin: 13px 0 0 -17px; }
.d-cap { font: 11.900px "Liberation Sans", sans-serif; fill: #333; letter-spacing: 0; }
.d-title { font: 700 15.600px "Liberation Sans", sans-serif; fill: #000; letter-spacing: 0; }
.d-t { font: 8.900px "Liberation Sans", sans-serif; fill: #222; text-anchor: middle; letter-spacing: 0; }
.vscroll { margin-left: auto; width: 20px; background: #dadada; border-right: 1px solid #e6e6e6; padding-top: 2px; display: flex; flex-direction: column; }
.vscroll p { height: 19px; background: #fff; border: 1px solid #b5b5b5; display: flex; align-items: center; justify-content: center; }
.vscroll .thumb { margin-top: 134px; height: 21px; }
.vscroll .down { margin-top: auto; margin-bottom: 2px; }

/* status bar */
.status { height: 27px; flex: none; background: #f3f3f3; display: flex; align-items: center; font-size: 13px; color: #333; }
.status > * { flex: none; }
.s-page { width: 108px; padding-left: 8px; }
.s-words { width: 96px; padding-left: 8px; }
.status span { padding-bottom: 1px; }
.s-read { margin-left: 1375px; margin-right: 13px; }
.s-print { width: 42px; height: 27px; background: #c5c5c5; display: flex; align-items: center; justify-content: center; margin-right: 13px; }
.zm { width: 10px; height: 2px; background: #555; margin: 0 4px 0 17px; }
.slider { width: 125px; height: 14px; position: relative; background: linear-gradient(#aaa, #aaa) 0 50% / 100% 1px no-repeat; }
.knob { position: absolute; left: 47px; top: 0; width: 6px; height: 14px; background: #666; }
.tick { position: absolute; left: 62px; top: 4px; width: 1px; height: 7px; background: #aaa; }
.zp { margin: 0 12px 0 4px; }

/* taskbar */
.taskbar { height: 60px; flex: none; display: flex; align-items: center; border-top: 1px solid #4b403f; color: #fff; font-size: 15px;
  background: linear-gradient(90deg, #291d28 0, #281d27 320px, #2c1b29 400px, #321a21 520px, #351c18 600px, #33200f 640px, #2d2616 720px, #2f2617 1040px, #35200f 1160px, #371b13 1320px, #3a1911 1500px, #371711 1780px, #321a17 1920px); }
.taskbar > * { flex: none; }
.wx { margin-left: 24px; margin-top: -2px; }
.wtext { width: 391px; padding-left: 9px; display: flex; flex-direction: column; line-height: 20px; letter-spacing: -.5px; }
.wtext, .clock { margin-top: -1px; }
.dimt { color: #cfc9cd; letter-spacing: -.4px; }
.start { margin-left: 1px; }
.search { margin-left: 17px; width: 275px; height: 40px; border-radius: 20px; background: rgba(255,255,255,.14); border: 1px solid rgba(255,255,255,.16); display: flex; align-items: center; padding-left: 14px; font-size: 16px; color: #ddd4d0; }
.search span { margin-left: 11px; width: 166px; letter-spacing: -.1px; }
.apps { display: flex; margin-left: 2.500px; }
.apps b { width: 55px; height: 50px; display: flex; align-items: center; justify-content: center; position: relative; font-weight: normal; }
.apps .cur { width: 50px; margin-left: 2.500px; background: rgba(255,255,255,.08); border: 1px solid rgba(255,255,255,.07); border-radius: 5px; }
.run { position: absolute; bottom: 1px; left: 50%; margin-left: -4px; width: 8px; height: 4px; border-radius: 2px; background: #a29a96; }
.now { width: 20px; margin-left: -10px; background: #dc9be5; bottom: 0; }
.badge { position: absolute; left: 25px; top: 3px; width: 26px; height: 20px; border-radius: 10px; background: #dc9be5; color: #111; font-size: 14px; line-height: 20px; text-align: center; text-decoration: none; }
.dbadge { position: absolute; left: 29px; top: 4px; width: 19px; height: 19px; border-radius: 50%; background: #455a64; color: #dde3e6; font-size: 12px; font-weight: 600; line-height: 19px; text-align: center; text-decoration: none; }
.wd { font-size: 13px; font-weight: 700; fill: #fff; }
.t1 { margin-left: 94px; }
.t2 { margin-left: 23px; }
.t3 { margin-left: 20px; }
.t4 { margin-left: 10px; }
.t5 { margin-left: 10px; }
.clock { width: 81px; text-align: right; line-height: 20px; display: flex; flex-direction: column; letter-spacing: -.4px; }
.t6 { margin-left: 12px; }
.t7 { margin-left: 23px; }
.pre { font-size: 8px; font-weight: 700; fill: #221a00; letter-spacing: .5px; }
```
